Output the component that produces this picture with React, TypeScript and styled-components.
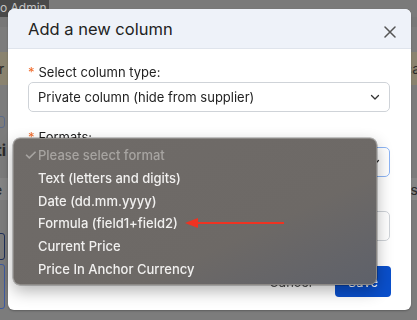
import React from "react";
import styled, { createGlobalStyle } from "styled-components";

const Global = createGlobalStyle`
  html, body { margin: 0; padding: 0; }
  body {
    width: 417px; height: 320px; overflow: hidden;
    background: #7b7b7b;
    font-family: Inter, "Noto Sans", sans-serif;
  }
`;

const Page = styled.div`
  width: 417px;
  height: 320px;
  display: flex;
  flex-direction: column;
  background: #7c7c7c;
`;

const TopBar = styled.div`
  height: 17px;
  display: flex;
  align-items: center;
  background: #7a7a7a;
  border-bottom: 10px solid #777;
`;

const AdminTag = styled.div`
  height: 17px;
  width: 49px;
  background: #494949;
  color: #c4c4c4;
  font-size: 12px;
  line-height: 15px;
  white-space: nowrap;
`;

const Strip = styled.div<{ $h: number; $bg: string; $mt?: number }>`
  height: ${(p) => p.$h}px;
  margin-top: ${(p) => p.$mt ?? 0}px;
  background: ${(p) => p.$bg};
  display: flex;
  justify-content: space-between;
  align-items: center;
  font-size: 14px;
  color: #2b2b2b;
  overflow: hidden;
`;

const BgText = styled.span<{ $bold?: boolean; $offset?: number }>`
  font-weight: ${(p) => (p.$bold ? 700 : 400)};
  margin-left: ${(p) => p.$offset ?? 0}px;
  margin-right: ${(p) => -(p.$offset ?? 0)}px;
  font-size: ${(p) => (p.$bold ? 16 : 14)}px;
  white-space: nowrap;
`;

const BgBox = styled.div<{ $h: number; $c: string; $mt: number }>`
  height: ${(p) => p.$h}px;
  margin-top: ${(p) => p.$mt}px;
  width: 10px;
  margin-left: -7px;
  border: 1.5px solid ${(p) => p.$c};
  border-radius: 3px;
`;

const Modal = styled.div`
  position: fixed;
  top: 9px;
  left: 8px;
  width: 403px;
  height: 301px;
  background: #fff;
  border-radius: 6px;
  overflow: hidden;
  display: flex;
  flex-direction: column;
  box-shadow: 0 1px 2px rgba(0, 0, 0, 0.25);
`;

const Header = styled.div`
  height: 40px;
  flex: none;
  background: #eef2f9;
  border-bottom: 1px solid #dfe4ec;
  display: flex;
  align-items: center;
  justify-content: space-between;
  padding: 0 14px 0 20px;
  box-sizing: border-box;
`;

const Title = styled.h2`
  margin: 0;
  font-size: 16.5px;
  font-weight: 400;
  color: #222;
`;

const Close = styled.button`
  border: 0;
  background: none;
  padding: 0;
  width: 14px;
  height: 14px;
  display: flex;
  align-items: center;
  justify-content: center;
  margin-top: 6px;
`;

const Body = styled.div`
  padding: 13px 21px 0 20px;
  display: flex;
  flex-direction: column;
`;

const Label = styled.div`
  height: 20px;
  font-size: 13px;
  line-height: 20px;
  color: #222;
  display: flex;
  gap: 4px;
`;

const Req = styled.span`
  color: #f06a2a;
`;

const Select = styled.div<{ $focus?: boolean; $mb: number }>`
  height: 30px;
  box-sizing: border-box;
  border: ${(p) => (p.$focus ? "1.5px solid #8db5f5" : "1px solid #cfd3d8")};
  border-radius: 5px;
  display: flex;
  align-items: center;
  justify-content: space-between;
  padding: 0 8px 0 9px;
  font-size: 13px;
  color: #222;
  margin-bottom: ${(p) => p.$mb}px;
`;

const Footer = styled.div`
  margin-top: auto;
  margin-bottom: 13px;
  padding-right: 20px;
  display: flex;
  justify-content: flex-end;
  align-items: center;
  gap: 23px;
`;

const CancelBtn = styled.button`
  border: 0;
  background: none;
  font-family: inherit;
  font-size: 13px;
  color: #555;
  padding: 0;
`;

const SaveBtn = styled.button`
  width: 56px;
  height: 31px;
  border: 0;
  border-radius: 4px;
  background: #0a4fcb;
  color: #fff;
  font-family: inherit;
  font-size: 13px;
`;

const Menu = styled.div`
  position: fixed;
  left: 13px;
  top: 138px;
  width: 364px;
  height: 147px;
  box-sizing: border-box;
  padding: 5px 0 4px;
  border-radius: 7px;
  border: 1px solid #8c8986;
  background: linear-gradient(155deg, #6f6b68 0%, #6d6966 65%, #5e616a 100%);
  box-shadow: 0 6px 16px rgba(0, 0, 0, 0.3), 0 0 0 0.5px rgba(0, 0, 0, 0.4);
  font-family: Inter, "Noto Sans", sans-serif;
`;

const Item = styled.div<{ $disabled?: boolean }>`
  height: 22.8px;
  line-height: 22.8px;
  display: flex;
  align-items: center;
  padding-left: 11px;
  font-size: 13px;
  font-weight: 500;
  color: ${(p) => (p.$disabled ? "#a7a4a1" : "#f1f0ef")};
  white-space: nowrap;
`;

const Check = styled.span`
  width: 13px;
  flex: none;
  font-size: 15px;
  margin-left: -1px;
  margin-right: 1px;
`;

const Arrow = styled.svg`
  position: fixed;
  left: 184px;
  top: 217px;
`;

const Chevron = () => (
  <svg width="12" height="12" viewBox="0 0 12 12">
    <path d="M2.5 4.5 L6 8 L9.5 4.5" fill="none" stroke="#333" strokeWidth="1.3" strokeLinecap="round" strokeLinejoin="round" />
  </svg>
);

const items = [
  "Text (letters and digits)",
  "Date (dd.mm.yyyy)",
  "Formula (field1+field2)",
  "Current Price",
  "Price In Anchor Currency",
];

export default function App() {
  return (
    <>
      <Global />
      <Page>
        <TopBar>
          <AdminTag>o Admin</AdminTag>
        </TopBar>
        <Strip $h={33} $bg="#8a836f" $mt={25}>
          <BgText $offset={-1}>r</BgText>
          <BgText $offset={3}>ca</BgText>
        </Strip>
        <Strip $h={13} $bg="#7c7c7c" $mt={30}>
          <BgBox $h={10} $c="#5a6a8a" $mt={0} />
        </Strip>
        <Strip $h={20} $bg="#7c7c7c" $mt={12}>
          <BgText $bold $offset={-4}>ti</BgText>
        </Strip>
        <Strip $h={22} $bg="#858585" $mt={18}>
          <BgText $offset={-6}>e</BgText>
          <BgText $offset={1}>s</BgText>
        </Strip>
        <BgBox $h={25} $c="#1f2f5a" $mt={33} />
        <BgBox $h={43} $c="#3e5aa0" $mt={4} />
      </Page>
      <Modal>
        <Header>
          <Title>Add a new column</Title>
          <Close aria-label="Close">
            <svg width="12" height="12" viewBox="0 0 12 12">
              <path d="M1 1 L11 11 M11 1 L1 11" stroke="#555" strokeWidth="1.5" strokeLinecap="round" />
            </svg>
          </Close>
        </Header>
        <Body>
          <Label>
            <Req>*</Req>Select column type:
          </Label>
          <Select $mb={15}>
            Private column (hide from supplier)
            <Chevron />
          </Select>
          <Label>
            <Req>*</Req>Formats:
          </Label>
          <Select $focus $mb={14}>
            Please select format
            <Chevron />
          </Select>
          <Label>
            <Req>*</Req>Name:
          </Label>
          <Select $mb={0}> </Select>
        </Body>
        <Footer>
          <CancelBtn>Cancel</CancelBtn>
          <SaveBtn>Save</SaveBtn>
        </Footer>
      </Modal>
      <Menu>
        <Item $disabled>
          <Check>✓</Check>Please select format
        </Item>
        {items.map((t) => (
          <Item key={t}>
            <Check />
            {t}
          </Item>
        ))}
      </Menu>
      <Arrow width="102" height="12" viewBox="0 0 102 12">
        <path d="M13 6 L100 6" stroke="#ee3322" strokeWidth="2.2" />
        <path d="M1 6 L14 1 L14 11 Z" fill="#ee3322" />
      </Arrow>
    </>
  );
}
